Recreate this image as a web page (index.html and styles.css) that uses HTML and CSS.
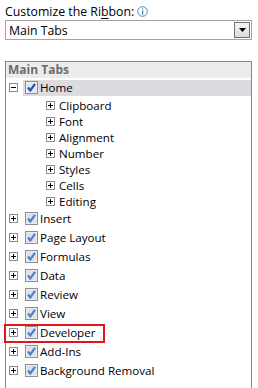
FILE: index.html
```html
<!DOCTYPE html>
<html lang="en">
<head>
    <meta charset="UTF-8">
    <title>Customize the Ribbon</title>
    <link rel="stylesheet" href="styles.css">
</head>
<body>
    <div class="title">
        Customize the Ri<u>b</u>bon:
        <svg class="info" width="11" height="11" viewBox="0 0 11 11">
            <circle cx="5.5" cy="5.5" r="4.8" fill="#fff" stroke="#4a86c5" stroke-width="1"/>
            <rect x="5" y="2.5" width="1.2" height="1.2" fill="#3b78bd"/>
            <rect x="5" y="4.6" width="1.2" height="4" fill="#3b78bd"/>
        </svg>
    </div>

    <div class="select">
        <span>Main Tabs</span>
        <span class="select-btn">
            <svg width="7" height="4" viewBox="0 0 7 4"><path d="M0 0h7L3.5 4z" fill="#000"/></svg>
        </span>
    </div>

    <div class="listbox">
        <div class="list-head">Main Tabs</div>

        <div class="row top">
            <svg class="exp" width="9" height="9" viewBox="0 0 9 9"><rect x="0.5" y="0.5" width="8" height="8" fill="#fff" stroke="#8c8c8c"/><path d="M2 4.5h5" stroke="#000"/></svg>
            <div class="item selected">
                <svg class="chk" width="13" height="13" viewBox="0 0 13 13"><rect x="0.5" y="0.5" width="12" height="12" fill="#f4f4f4" stroke="#8e8f8f"/><rect x="1.5" y="1.5" width="10" height="10" fill="#e6e8ee"/><path d="M3 6.5l2.3 3L10 2.8" fill="none" stroke="#1f4fb8" stroke-width="2.2"/></svg>
                <span>Home</span>
            </div>
        </div>

        <div class="row sub"><svg class="exp" width="9" height="9" viewBox="0 0 9 9"><rect x="0.5" y="0.5" width="8" height="8" fill="#fff" stroke="#8c8c8c"/><path d="M2 4.5h5M4.5 2v5" stroke="#000"/></svg><span>Clipboard</span></div>
        <div class="row sub"><svg class="exp" width="9" height="9" viewBox="0 0 9 9"><rect x="0.5" y="0.5" width="8" height="8" fill="#fff" stroke="#8c8c8c"/><path d="M2 4.5h5M4.5 2v5" stroke="#000"/></svg><span>Font</span></div>
        <div class="row sub"><svg class="exp" width="9" height="9" viewBox="0 0 9 9"><rect x="0.5" y="0.5" width="8" height="8" fill="#fff" stroke="#8c8c8c"/><path d="M2 4.5h5M4.5 2v5" stroke="#000"/></svg><span>Alignment</span></div>
        <div class="row sub"><svg class="exp" width="9" height="9" viewBox="0 0 9 9"><rect x="0.5" y="0.5" width="8" height="8" fill="#fff" stroke="#8c8c8c"/><path d="M2 4.5h5M4.5 2v5" stroke="#000"/></svg><span>Number</span></div>
        <div class="row sub"><svg class="exp" width="9" height="9" viewBox="0 0 9 9"><rect x="0.5" y="0.5" width="8" height="8" fill="#fff" stroke="#8c8c8c"/><path d="M2 4.5h5M4.5 2v5" stroke="#000"/></svg><span>Styles</span></div>
        <div class="row sub"><svg class="exp" width="9" height="9" viewBox="0 0 9 9"><rect x="0.5" y="0.5" width="8" height="8" fill="#fff" stroke="#8c8c8c"/><path d="M2 4.5h5M4.5 2v5" stroke="#000"/></svg><span>Cells</span></div>
        <div class="row sub"><svg class="exp" width="9" height="9" viewBox="0 0 9 9"><rect x="0.5" y="0.5" width="8" height="8" fill="#fff" stroke="#8c8c8c"/><path d="M2 4.5h5M4.5 2v5" stroke="#000"/></svg><span>Editing</span></div>

        <div class="row top">
            <svg class="exp" width="9" height="9" viewBox="0 0 9 9"><rect x="0.5" y="0.5" width="8" height="8" fill="#fff" stroke="#8c8c8c"/><path d="M2 4.5h5M4.5 2v5" stroke="#000"/></svg>
            <div class="item"><svg class="chk" width="13" height="13" viewBox="0 0 13 13"><rect x="0.5" y="0.5" width="12" height="12" fill="#f4f4f4" stroke="#8e8f8f"/><rect x="1.5" y="1.5" width="10" height="10" fill="#e2e2e6"/><path d="M3 6.5l2.3 3L10 2.8" fill="none" stroke="#4d7fcf" stroke-width="2.2"/></svg><span>Insert</span></div>
        </div>
        <div class="row top">
            <svg class="exp" width="9" height="9" viewBox="0 0 9 9"><rect x="0.5" y="0.5" width="8" height="8" fill="#fff" stroke="#8c8c8c"/><path d="M2 4.5h5M4.5 2v5" stroke="#000"/></svg>
            <div class="item"><svg class="chk" width="13" height="13" viewBox="0 0 13 13"><rect x="0.5" y="0.5" width="12" height="12" fill="#f4f4f4" stroke="#8e8f8f"/><rect x="1.5" y="1.5" width="10" height="10" fill="#e2e2e6"/><path d="M3 6.5l2.3 3L10 2.8" fill="none" stroke="#4d7fcf" stroke-width="2.2"/></svg><span>Page Layout</span></div>
        </div>
        <div class="row top">
            <svg class="exp" width="9" height="9" viewBox="0 0 9 9"><rect x="0.5" y="0.5" width="8" height="8" fill="#fff" stroke="#8c8c8c"/><path d="M2 4.5h5M4.5 2v5" stroke="#000"/></svg>
            <div class="item"><svg class="chk" width="13" height="13" viewBox="0 0 13 13"><rect x="0.5" y="0.5" width="12" height="12" fill="#f4f4f4" stroke="#8e8f8f"/><rect x="1.5" y="1.5" width="10" height="10" fill="#e2e2e6"/><path d="M3 6.5l2.3 3L10 2.8" fill="none" stroke="#4d7fcf" stroke-width="2.2"/></svg><span>Formulas</span></div>
        </div>
        <div class="row top">
            <svg class="exp" width="9" height="9" viewBox="0 0 9 9"><rect x="0.5" y="0.5" width="8" height="8" fill="#fff" stroke="#8c8c8c"/><path d="M2 4.5h5M4.5 2v5" stroke="#000"/></svg>
            <div class="item"><svg class="chk" width="13" height="13" viewBox="0 0 13 13"><rect x="0.5" y="0.5" width="12" height="12" fill="#f4f4f4" stroke="#8e8f8f"/><rect x="1.5" y="1.5" width="10" height="10" fill="#e2e2e6"/><path d="M3 6.5l2.3 3L10 2.8" fill="none" stroke="#4d7fcf" stroke-width="2.2"/></svg><span>Data</span></div>
        </div>
        <div class="row top">
            <svg class="exp" width="9" height="9" viewBox="0 0 9 9"><rect x="0.5" y="0.5" width="8" height="8" fill="#fff" stroke="#8c8c8c"/><path d="M2 4.5h5M4.5 2v5" stroke="#000"/></svg>
            <div class="item"><svg class="chk" width="13" height="13" viewBox="0 0 13 13"><rect x="0.5" y="0.5" width="12" height="12" fill="#f4f4f4" stroke="#8e8f8f"/><rect x="1.5" y="1.5" width="10" height="10" fill="#e2e2e6"/><path d="M3 6.5l2.3 3L10 2.8" fill="none" stroke="#4d7fcf" stroke-width="2.2"/></svg><span>Review</span></div>
        </div>
        <div class="row top">
            <svg class="exp" width="9" height="9" viewBox="0 0 9 9"><rect x="0.5" y="0.5" width="8" height="8" fill="#fff" stroke="#8c8c8c"/><path d="M2 4.5h5M4.5 2v5" stroke="#000"/></svg>
            <div class="item"><svg class="chk" width="13" height="13" viewBox="0 0 13 13"><rect x="0.5" y="0.5" width="12" height="12" fill="#f4f4f4" stroke="#8e8f8f"/><rect x="1.5" y="1.5" width="10" height="10" fill="#e2e2e6"/><path d="M3 6.5l2.3 3L10 2.8" fill="none" stroke="#4d7fcf" stroke-width="2.2"/></svg><span>View</span></div>
        </div>
        <div class="row top">
            <div class="marked">
                <svg class="exp" width="9" height="9" viewBox="0 0 9 9"><rect x="0.5" y="0.5" width="8" height="8" fill="#fff" stroke="#8c8c8c"/><path d="M2 4.5h5M4.5 2v5" stroke="#000"/></svg>
                <div class="item"><svg class="chk" width="13" height="13" viewBox="0 0 13 13"><rect x="0.5" y="0.5" width="12" height="12" fill="#f4f4f4" stroke="#8e8f8f"/><rect x="1.5" y="1.5" width="10" height="10" fill="#e2e2e6"/><path d="M3 6.5l2.3 3L10 2.8" fill="none" stroke="#4d7fcf" stroke-width="2.2"/></svg><span>Developer</span></div>
            </div>
        </div>
        <div class="row top">
            <svg class="exp" width="9" height="9" viewBox="0 0 9 9"><rect x="0.5" y="0.5" width="8" height="8" fill="#fff" stroke="#8c8c8c"/><path d="M2 4.5h5M4.5 2v5" stroke="#000"/></svg>
            <div class="item"><svg class="chk" width="13" height="13" viewBox="0 0 13 13"><rect x="0.5" y="0.5" width="12" height="12" fill="#f4f4f4" stroke="#8e8f8f"/><rect x="1.5" y="1.5" width="10" height="10" fill="#e2e2e6"/><path d="M3 6.5l2.3 3L10 2.8" fill="none" stroke="#4d7fcf" stroke-width="2.2"/></svg><span>Add-Ins</span></div>
        </div>
        <div class="row top">
            <svg class="exp" width="9" height="9" viewBox="0 0 9 9"><rect x="0.5" y="0.5" width="8" height="8" fill="#fff" stroke="#8c8c8c"/><path d="M2 4.5h5M4.5 2v5" stroke="#000"/></svg>
            <div class="item"><svg class="chk" width="13" height="13" viewBox="0 0 13 13"><rect x="0.5" y="0.5" width="12" height="12" fill="#f4f4f4" stroke="#8e8f8f"/><rect x="1.5" y="1.5" width="10" height="10" fill="#e2e2e6"/><path d="M3 6.5l2.3 3L10 2.8" fill="none" stroke="#4d7fcf" stroke-width="2.2"/></svg><span>Background Removal</span></div>
        </div>
    </div>
</body>
</html>
```

FILE: styles.css
```css
html, body {
    height: 100%;
    overflow: hidden;
}
body {
    margin: 0;
    padding: 3px 6px 0 5px;
    box-sizing: border-box;
    display: flex;
    flex-direction: column;
    font-family: "Open Sans", Arial, sans-serif;
    font-size: 12px;
    color: #000;
    background: #fff;
}
.title {
    display: flex;
    align-items: center;
    height: 17px;
    line-height: 17px;
    font-size: 12.3px;
}
.title u {
    text-decoration-thickness: 1px;
    text-underline-offset: 2px;
}
.info {
    margin-left: 3px;
}
.select {
    display: flex;
    align-items: center;
    justify-content: space-between;
    height: 18px;
    border: 1px solid #a5a5a5;
    padding-left: 3px;
    font-size: 12.3px;
}
.select-btn {
    display: flex;
    align-items: center;
    justify-content: center;
    width: 14px;
    height: 14px;
    margin-right: 1px;
    border: 1px solid #707070;
    background: linear-gradient(#f4f4f4, #dcdcdc);
}
.listbox {
    flex: 1;
    margin-top: 21px;
    border: 1px solid #828790;
    border-bottom: none;
    font-size: 11.6px;
}
.list-head {
    height: 16px;
    line-height: 16px;
    padding-left: 2px;
    background: #ececec;
    color: #6d6d6d;
    font-weight: bold;
    font-size: 12px;
}
.row {
    display: flex;
    align-items: center;
}
.row.top {
    height: 19px;
    padding-left: 3px;
}
.row.sub {
    height: 16px;
    padding-left: 40px;
}
.row.sub .exp {
    margin-right: 4px;
}
.exp {
    flex: none;
}
.item {
    display: flex;
    align-items: center;
    flex: 1;
    height: 16px;
    margin-left: 5px;
    padding-left: 2px;
}
.item.selected {
    background: #dcdce0;
}
.chk {
    margin-right: 2px;
    flex: none;
}
.marked {
    position: relative;
    display: flex;
    align-items: center;
}
.marked::after {
    content: "";
    position: absolute;
    left: -5px;
    right: -10px;
    top: -1px;
    bottom: -2px;
    border: 2px solid #e3141b;
}
```
